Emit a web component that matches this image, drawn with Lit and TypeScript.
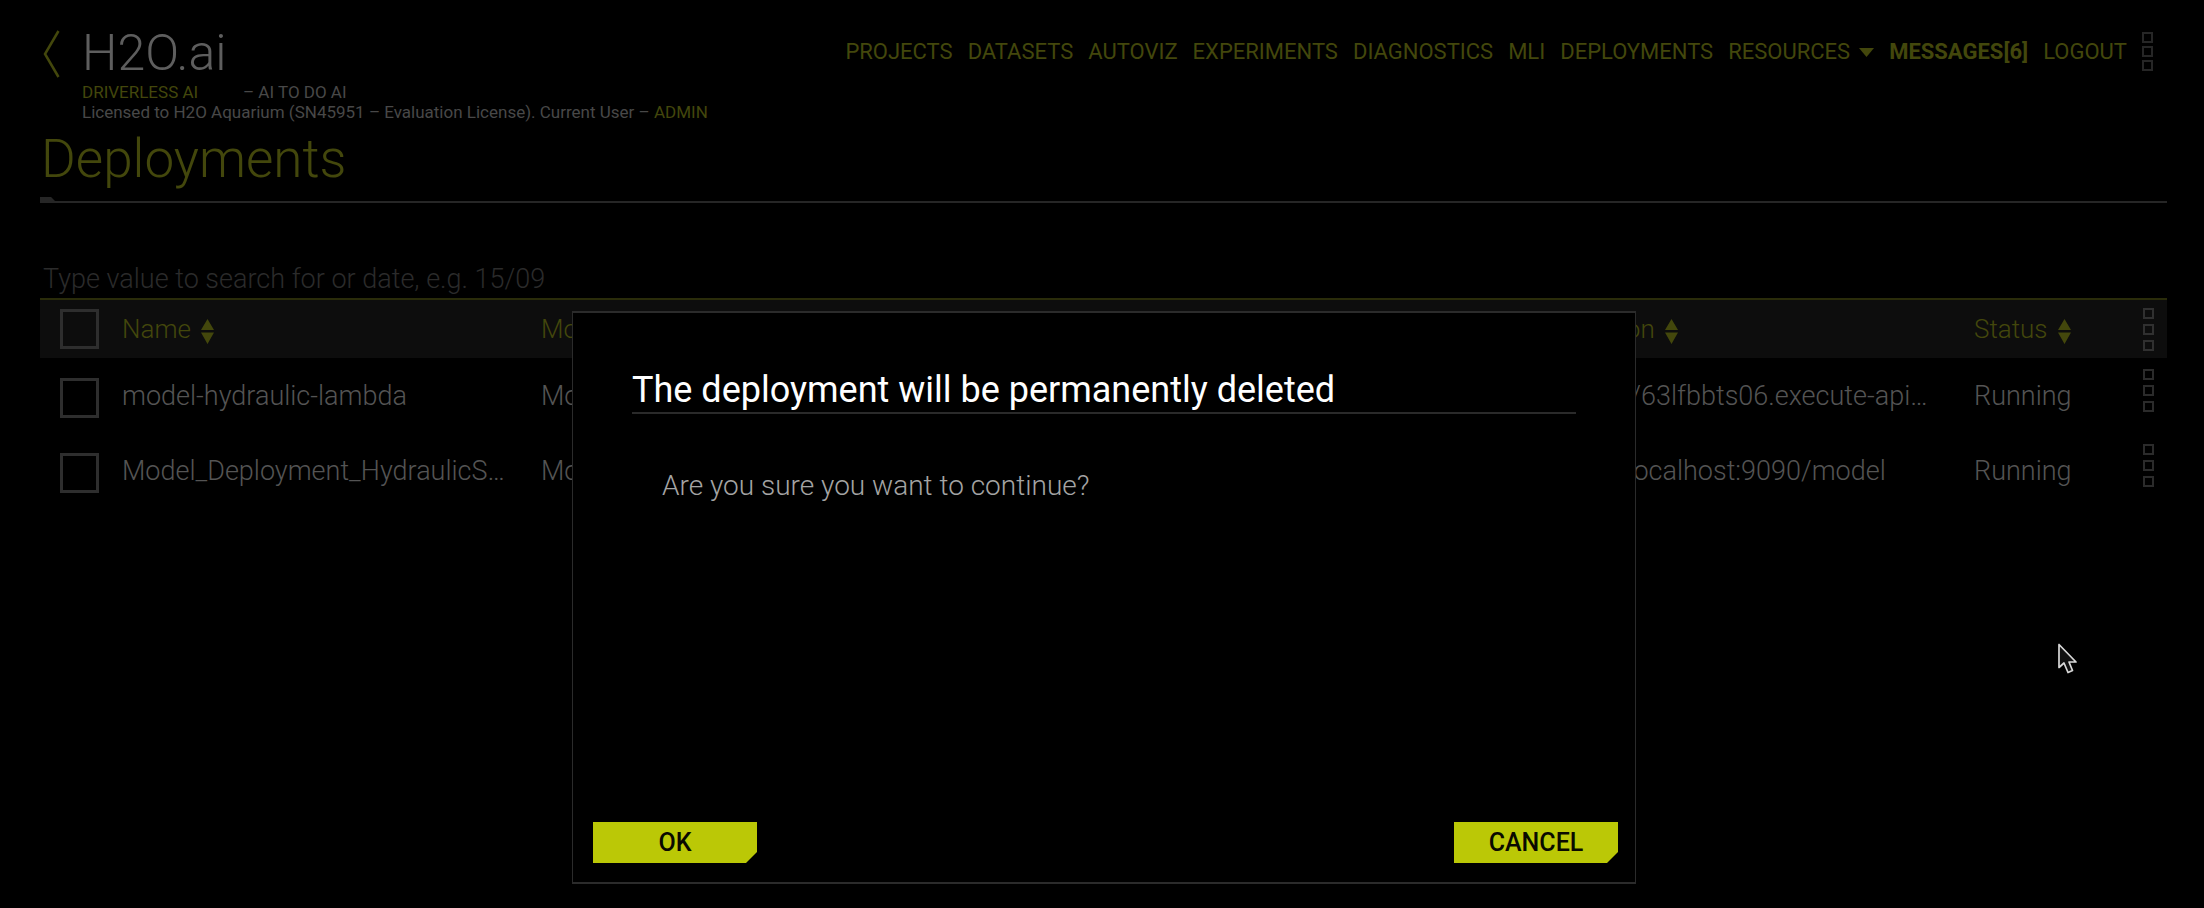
import { LitElement, html, css, svg } from "lit";
import { customElement, property, state } from "lit/decorators.js";

interface Deployment {
  name: string;
  model: string;
  location: string;
  status: string;
}

const NAV_BEFORE = ["Projects", "Datasets", "AutoViz", "Experiments", "Diagnostics", "MLI", "Deployments"];

const COLUMNS = ["Name", "Model", "Location", "Status"];

const DEPLOYMENTS: Deployment[] = [
  { name: "model-hydraulic-lambda", model: "Model", location: "https://63lfbbts06.execute-api…", status: "Running" },
  { name: "Model_Deployment_HydraulicS…", model: "Model", location: "http://localhost:9090/model", status: "Running" },
];

const sortIcon = svg`<svg class="sort" width="13" height="25" viewBox="0 0 13 25" aria-hidden="true">
  <path d="M6.5 0 13 11H0zM0 13.500h13L6.500 25z" fill="currentColor"/></svg>`;

/* Three stacked squares used for every overflow menu. */
@customElement("kebab-button")
class KebabButton extends LitElement {
  @property() label = "Menu";

  static styles = css`
    :host { display: flex; }
    button {
      display: grid;
      gap: var(--kebab-gap, 5px);
      padding: 0;
      border: 0;
      background: none;
      color: inherit;
    }
    i { width: 11px; height: 11px; box-sizing: border-box; border: 2px solid currentColor; }
  `;

  render() {
    return html`<button type="button" aria-label=${this.label}><i></i><i></i><i></i></button>`;
  }
}

@customElement("confirm-dialog")
class ConfirmDialog extends LitElement {
  @property() heading = "";

  static styles = css`
    :host {
      position: absolute;
      inset: 0;
      display: flex;
      justify-content: center;
      align-items: flex-end;
      padding: 0 0 24px 4px;
      box-sizing: border-box;
    }
    dialog {
      position: static;
      display: flex;
      flex-direction: column;
      margin: 0;
      box-sizing: border-box;
      width: 1064px;
      max-width: 94vw;
      min-height: 573px;
      padding: 47px 17px 19px 20px;
      border: 2px solid #2b2b2b;
      border-width: 2px 1px;
      background: #000;
      color: #fff;
    }
    h2 {
      margin: 0 42px 0 39px;
      padding-top: 8px;
      border-bottom: 2px solid #2a2a2a;
      font-size: 36px;
      font-weight: 400;
      line-height: 44px;
    }
    p {
      margin: 52px 69px;
      color: #a4a4a4;
      font-size: 28px;
      font-weight: 300;
      line-height: 40px;
    }
    footer { display: flex; justify-content: space-between; margin-top: auto; }
    button {
      width: 164px;
      height: 41px;
      padding: 0;
      border: 0;
      background: #bbc806;
      clip-path: polygon(0 0, 100% 0, 100% calc(100% - 11px), calc(100% - 11px) 100%, 0 100%);
      color: #0a0a00;
      font: 500 25px/41px Roboto, sans-serif;
    }
  `;

  private close() {
    this.dispatchEvent(new CustomEvent("close"));
  }

  render() {
    return html`<dialog open aria-labelledby="title">
      <h2 id="title">${this.heading}</h2>
      <p><slot></slot></p>
      <footer>
        <button type="button" @click=${this.close}>OK</button>
        <button type="button" @click=${this.close}>CANCEL</button>
      </footer>
    </dialog>`;
  }
}

@customElement("app-root")
class AppRoot extends LitElement {
  @state() private confirming = true;

  static styles = css`
    :host {
      --lime: #43470c;
      --grey: #545454;
      --dim: #262626;
      position: relative;
      display: block;
      min-height: 100vh;
      box-sizing: border-box;
      padding: 0 37px 0 40px;
      overflow: hidden;
      background: #000;
      color: var(--grey);
      font-family: Roboto, sans-serif;
      font-weight: 400;
    }
    a { color: var(--lime); text-decoration: none; }
    header { display: flex; justify-content: space-between; align-items: flex-start; }
    .brand { display: grid; grid-template-columns: 42px auto; padding-top: 24px; }
    .back { padding: 6px 0 0 3px; }
    .back svg { display: block; }
    .logo { color: #5e5e5e; font-size: 50px; font-weight: 300; line-height: 58px; }
    .meta { grid-column: 2; font-size: 17px; line-height: 20px; color: #484848; }
    .meta .product { display: inline-block; min-width: 161px; }
    .meta span, .meta a { color: var(--lime); }
    nav { display: flex; align-items: center; gap: 15px; padding: 32px 14px 0 0; color: var(--dim); }
    nav a { font-size: 22px; line-height: 36px; text-transform: uppercase; }
    nav .strong { font-weight: 700; }
    nav .caret { margin-left: 9px; vertical-align: middle; }
    nav kebab-button { --kebab-gap: 3px; }
    h1 {
      margin: 0;
      padding-left: 1px;
      color: var(--lime);
      font-size: 53px;
      font-weight: 300;
      line-height: 75px;
    }
    .rule { height: 6px; background: linear-gradient(#262626, #262626) 0 100% / 100% 2px no-repeat; }
    .rule i { display: block; width: 17px; height: 6px; background: #262626; clip-path: polygon(0 0, 65% 0, 100% 100%, 0 100%); }
    .search {
      display: block;
      width: 100%;
      height: 44px;
      margin-top: 53px;
      padding: 4px 3px 0;
      box-sizing: border-box;
      border: 0;
      border-bottom: 2px solid #2a2c0a;
      outline: 0;
      background: none;
      color: var(--grey);
      font: 300 27px/36px Roboto, sans-serif;
    }
    .search::placeholder { color: #2b2b2b; opacity: 1; }
    table { width: 100%; border-collapse: collapse; table-layout: fixed; font-size: 27px; font-weight: 300; }
    th, td { padding: 0; text-align: left; font-weight: inherit; white-space: nowrap; }
    th { height: 58px; background: #0d0d0d; color: var(--lime); font-size: 26px; }
    td { height: 75px; }
    .pick { width: 82px; }
    .name { width: 419px; }
    .location { width: 418px; }
    .status { width: 169px; }
    .more { width: 24px; color: #2b2b2b; }
    th.more { color: #303030; }
    td.more { height: 65px; padding-bottom: 10px; }
    .sort { margin-left: 10px; vertical-align: middle; }
    th button { padding: 0; border: 0; background: none; color: inherit; font: inherit; }
    input[type="checkbox"] {
      appearance: none;
      display: block;
      width: 39px;
      height: 40px;
      margin: 0 0 0 20px;
      border: 3px solid #2e2e2e;
    }
    td input[type="checkbox"] { margin-top: 4px; }
    .pointer { position: absolute; left: 93.3%; top: 642px; }
  `;

  render() {
    return html`
      <header>
        <div class="brand">
          <a class="back" href="#" aria-label="Back">
            <svg width="17" height="48" viewBox="0 0 17 48"><path d="M15.500 1 2 24l13.500 23" fill="none" stroke="currentColor" stroke-width="2.500"/></svg>
          </a>
          <div class="logo">H2O.ai</div>
          <div class="meta"><span class="product">DRIVERLESS AI</span>– AI TO DO AI</div>
          <div class="meta">Licensed to H2O Aquarium (SN45951 – Evaluation License). Current User – <a href="#">ADMIN</a></div>
        </div>
        <nav>
          ${NAV_BEFORE.map((item) => html`<a href="#">${item}</a>`)}
          <a href="#">Resources<svg class="caret" width="15" height="9" viewBox="0 0 15 9" aria-hidden="true"><path d="M0 0h15L7.500 9z" fill="currentColor"/></svg></a>
          <a class="strong" href="#">Messages[6]</a>
          <a href="#">Logout</a>
          <kebab-button label="More"></kebab-button>
        </nav>
      </header>
      <h1>Deployments</h1>
      <div class="rule"><i></i></div>
      <input class="search" type="search" aria-label="Search" placeholder="Type value to search for or date, e.g. 15/09" />
      <table>
        <thead>
          <tr>
            <th class="pick"><input type="checkbox" aria-label="Select all" /></th>
            ${COLUMNS.map((c) => html`<th class=${c.toLowerCase()}><button type="button">${c}${sortIcon}</button></th>`)}
            <th class="more"><kebab-button label="Table actions"></kebab-button></th>
          </tr>
        </thead>
        <tbody>
          ${DEPLOYMENTS.map((d) => html`<tr>
            <td><input type="checkbox" aria-label="Select ${d.name}" /></td>
            <td>${d.name}</td>
            <td>${d.model}</td>
            <td>${d.location}</td>
            <td>${d.status}</td>
            <td class="more"><kebab-button label="Row actions"></kebab-button></td>
          </tr>`)}
        </tbody>
      </table>
      ${this.confirming
        ? html`<confirm-dialog heading="The deployment will be permanently deleted" @close=${() => (this.confirming = false)}>Are you sure you want to continue?</confirm-dialog>`
        : ""}
      <svg class="pointer" width="22" height="33" viewBox="0 0 22 33" aria-hidden="true">
        <path d="M3 2.500v23l5-4.500 4 9.500 4.500-2-3.500-8.500h7z" fill="#111" stroke="#d8d8d8" stroke-width="1.700" stroke-linejoin="round"/>
      </svg>
    `;
  }
}
